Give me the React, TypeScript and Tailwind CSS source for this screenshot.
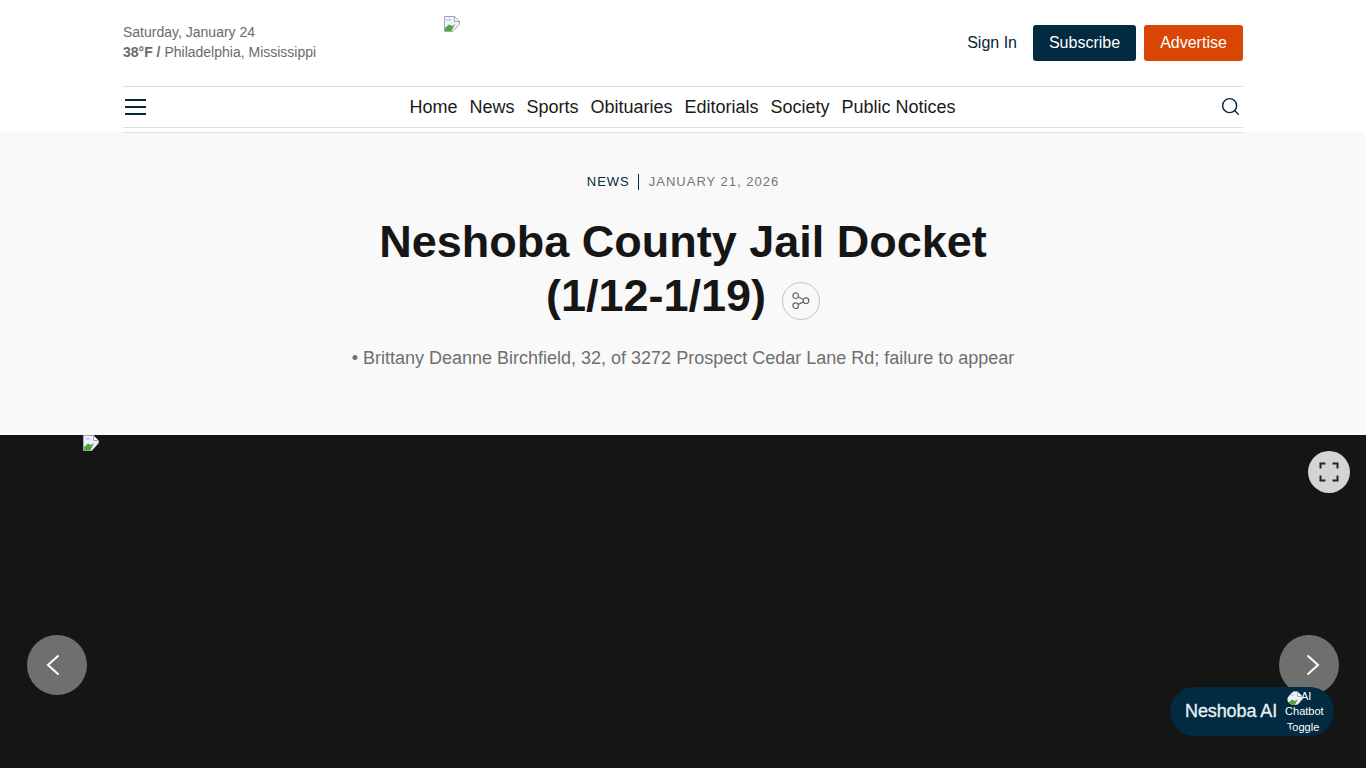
import { Search } from 'lucide-react'

const navLinks = ['Home', 'News', 'Sports', 'Obituaries', 'Editorials', 'Society', 'Public Notices']

// chrome's broken image placeholder
function BrokenImage() {
  return (
    <svg width="16" height="16" viewBox="0 0 16 16" className="block shrink-0">
      <path d="M0.5 0.5H10.5L15.5 5.5V8L9 15.5H0.5Z" fill="#eef2fb" stroke="#a3a7ae" />
      <path d="M10.5 0.5V5.5H15.5Z" fill="#fff" stroke="#a3a7ae" />
      <path d="M2 3.5C4 2 6 2.5 8 4C6 5.5 3.5 5.5 2 3.5Z" fill="#c3d5f5" />
      <path d="M1 15V12L5 8.5L8 10L11 8L7.5 15Z" fill="#4fa63c" />
    </svg>
  )
}

function Header() {
  return (
    <header className="bg-white h-[132px]">
      <div className="w-[1120px] mx-auto">
        <div className="h-[86px] flex items-start justify-between relative">
          <div className="pt-[22px] text-[14px] leading-[20px] text-[#6b6b6b]">
            <div>Saturday, January 24</div>
            <div>
              <span className="font-bold">38°F /</span> Philadelphia, Mississippi
            </div>
          </div>
          <div className="absolute left-[321px] top-[16px]">
            <BrokenImage />
          </div>
          <div className="flex items-center pt-[25px]">
            <a className="text-[16px] text-[#062536] mr-4">Sign In</a>
            <a className="h-[36px] w-[103px] flex items-center justify-center rounded-[3px] bg-[#022a40] text-white text-[16px]">
              Subscribe
            </a>
            <a className="h-[36px] w-[99px] ml-2 flex items-center justify-center rounded-[3px] bg-[#d84504] text-white text-[16px]">
              Advertise
            </a>
          </div>
        </div>
        <div className="h-[42px] border-y border-[#dedede] flex items-center justify-between">
          <div className="w-[21px] ml-[2px] flex flex-col gap-[5px]">
            <span className="h-[2px] bg-[#062536]" />
            <span className="h-[2px] bg-[#062536]" />
            <span className="h-[2px] bg-[#062536]" />
          </div>
          <nav className="flex gap-3 text-[18px] text-[#1a1a1a] ml-[-1px]">
            {navLinks.map((l) => (
              <a key={l}>{l}</a>
            ))}
          </nav>
          <Search size={21} strokeWidth={1.6} className="text-[#062536] mr-[2px] mb-[2px]" />
        </div>
      </div>
    </header>
  )
}

function Article() {
  return (
    <section className="h-[303px] bg-[#f9f9f9]">
      <div className="w-[1120px] mx-auto border-t border-[#dedede] pt-[41px] flex flex-col items-center">
        <div className="flex items-center text-[13px] leading-[16px] tracking-[1px]">
          <span className="text-[#022a40] pr-2 border-r border-[#022a40]">NEWS</span>
          <span className="text-[#767676] pl-[10px]">JANUARY 21, 2026</span>
        </div>
        <h1 className="mt-[25px] text-[45px] leading-[54px] font-bold text-[#161616] text-center">
          <div>Neshoba County Jail Docket</div>
          <div className="flex items-center justify-center">
            (1/12-1/19)
            <button className="ml-[16px] mt-[10px] w-[38px] h-[38px] rounded-full border border-[#c4c4c4] flex items-center justify-center text-[#666]">
              <svg width="18" height="18" viewBox="0 0 18 18" fill="none" stroke="currentColor" strokeWidth="1.2">
                <circle cx="3.7" cy="3.7" r="2.8" />
                <circle cx="3.7" cy="13.7" r="2.8" />
                <circle cx="14" cy="8.7" r="2.8" />
                <path d="M6.2 5L11.5 7.5M6.2 12.4L11.5 9.9" />
              </svg>
            </button>
          </div>
        </h1>
        <p className="mt-[22px] text-[18px] leading-[26px] text-[#6f6f6f]">
          • Brittany Deanne Birchfield, 32, of 3272 Prospect Cedar Lane Rd; failure to appear
        </p>
      </div>
    </section>
  )
}

function Hero() {
  return (
    <section className="relative h-[333px] bg-[#151515] overflow-hidden">
      <div className="pl-[83px]">
        <BrokenImage />
      </div>
      <button className="absolute right-[16px] top-[16px] w-[42px] h-[42px] rounded-full bg-[#d4d4d4] flex items-center justify-center">
        <svg width="20" height="20" viewBox="0 0 20 20" fill="none" stroke="#222" strokeWidth="2">
          <path d="M1.5 6.5V1.5H6.5M13.5 1.5H18.5V6.5M18.5 13.5V18.5H13.5M6.5 18.5H1.5V13.5" />
        </svg>
      </button>
      <button className="absolute left-[27px] top-[200px] w-[60px] h-[60px] rounded-full bg-[#6f6f6f] flex items-center justify-center">
        <svg width="14" height="22" viewBox="0 0 14 22" fill="none" stroke="#fff" strokeWidth="2" className="mr-2">
          <path d="M12.5 1.5L2 11L12.5 20.5" />
        </svg>
      </button>
      <button className="absolute right-[27px] top-[200px] w-[60px] h-[60px] rounded-full bg-[#6f6f6f] flex items-center justify-center">
        <svg width="14" height="22" viewBox="0 0 14 22" fill="none" stroke="#fff" strokeWidth="2" className="ml-2">
          <path d="M1.5 1.5L12 11L1.5 20.5" />
        </svg>
      </button>
    </section>
  )
}

function ChatToggle() {
  return (
    <div className="absolute left-[1170px] top-[687px] w-[164px] h-[49px] rounded-full bg-[#022a40] flex items-center pl-[15px]">
      <span className="text-[18px] tracking-[-0.1px] text-[#e8f1f6] whitespace-nowrap [-webkit-text-stroke:0.3px]">
        Neshoba AI
      </span>
      {/* alt text of the round toggle image gets cut by its circle */}
      <div className="relative ml-[8px] w-[40px] h-[48px] shrink-0 rounded-full overflow-hidden text-[11px] leading-[15.5px] text-white">
        <div className="w-[36px] pt-[1px] text-center">
          <div className="pl-[6px]">AI</div>
          <div>Chatbot</div>
          <div>Toggle</div>
        </div>
        <div className="absolute left-[2px] top-[3px] w-[15px] h-[14px] rounded-full overflow-hidden">
          <BrokenImage />
        </div>
      </div>
    </div>
  )
}

export default function App() {
  return (
    <div className="relative h-screen overflow-hidden bg-[#f9f9f9] font-['Liberation_Sans',Arial,sans-serif]">
      <Header />
      <Article />
      <Hero />
      <ChatToggle />
    </div>
  )
}
